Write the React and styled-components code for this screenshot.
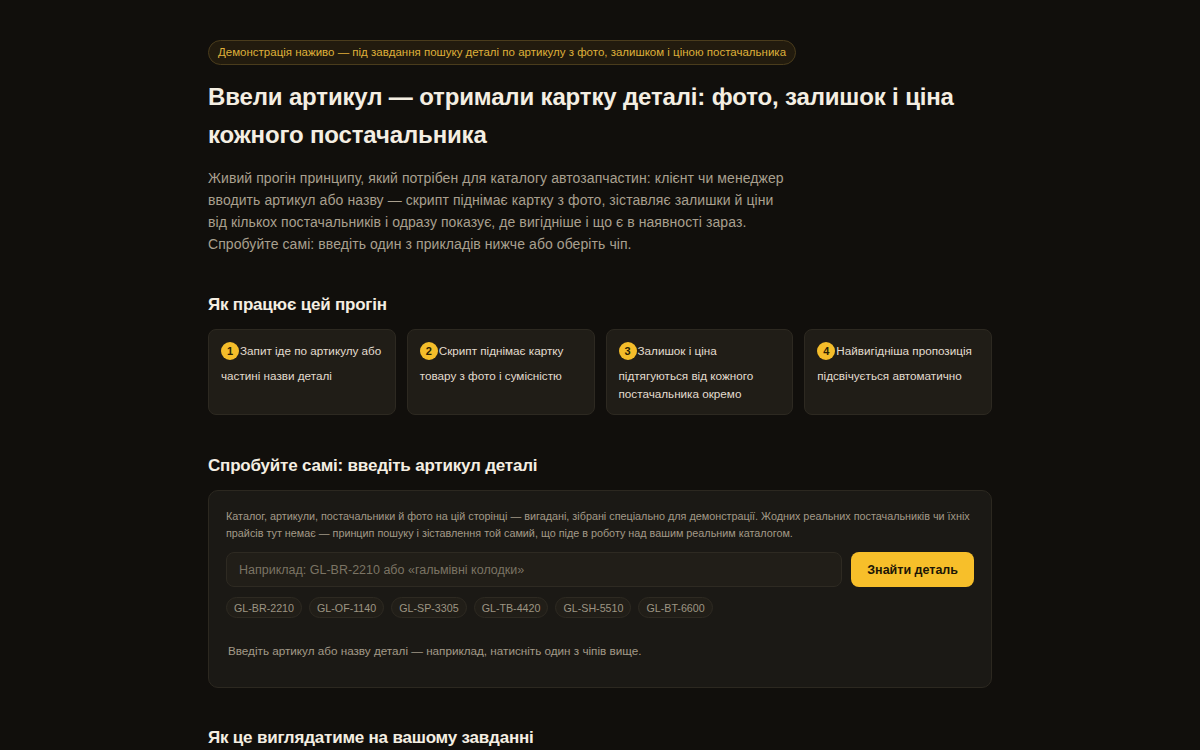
import React, { useState } from "react";
import styled, { createGlobalStyle } from "styled-components";

const GlobalStyle = createGlobalStyle`
  html, body { margin: 0; padding: 0; background: #110f0c; }
  body { font-family: "Liberation Sans", Arial, sans-serif; color: #ece6da; }
  * { box-sizing: border-box; }
`;

const Page = styled.main`
  max-width: 784px;
  margin: 0 auto;
  padding: 40px 0 60px;
`;

const Badge = styled.span`
  display: inline-block;
  height: 25px;
  line-height: 23px;
  padding: 0 9px;
  border: 1px solid #4a3c1c;
  border-radius: 999px;
  background: #221b0e;
  color: #dfb03a;
  font-size: 11.5px;
`;

const Title = styled.h1`
  margin: 13px 0 0;
  font-size: 24px;
  line-height: 38px;
  font-weight: 700;
  letter-spacing: -0.15px;
  color: #f4eee2;
  max-width: 760px;
`;

const Lead = styled.p`
  margin: 13px 0 0;
  max-width: 580px;
  font-size: 14px;
  line-height: 22px;
  letter-spacing: 0.08px;
  color: #a9a08f;
`;

const SectionTitle = styled.h2`
  margin: ${(p) => p.$top || 40}px 0 0;
  font-size: 17px;
  line-height: 24px;
  font-weight: 700;
  letter-spacing: -0.2px;
  color: #f4eee2;
`;

const Steps = styled.div`
  display: grid;
  grid-template-columns: repeat(4, 1fr);
  gap: 11px;
  margin-top: 12px;
`;

const Step = styled.div`
  min-height: 86px;
  padding: 12px 10px 10px 12px;
  background: #201d17;
  border: 1px solid #2d2921;
  border-radius: 8px;
  font-size: 11.7px;
  line-height: 18px;
  color: #e2dccf;
`;

const StepHead = styled.div`
  display: flex;
  align-items: center;
  gap: 1px;
  height: 18px;
  margin-bottom: 7px;
  white-space: nowrap;
`;

const Num = styled.span`
  display: inline-flex;
  align-items: center;
  justify-content: center;
  flex: none;
  width: 18px;
  height: 18px;
  border-radius: 50%;
  background: #f4bd2a;
  color: #2a1f05;
  font-size: 11px;
  font-weight: 700;
`;

const StepText = styled.div``;

const Panel = styled.section`
  margin-top: 12px;
  padding: 17px 17px 27px;
  background: #1b1915;
  border: 1px solid #2c2820;
  border-radius: 10px;
`;

const Note = styled.p`
  margin: 0;
  font-size: 10.8px;
  line-height: 17px;
  color: #a39a88;
`;

const SearchRow = styled.form`
  display: flex;
  gap: 9px;
  margin-top: 10px;
`;

const Input = styled.input`
  flex: 1;
  height: 35px;
  padding: 0 12px;
  background: #211e18;
  border: 1px solid #2e2a22;
  border-radius: 8px;
  color: #ece6da;
  font-family: inherit;
  font-size: 12.5px;
  outline: none;
  &::placeholder { color: #7b7464; }
`;

const Button = styled.button`
  height: 35px;
  padding: 0 16px;
  border: 0;
  border-radius: 8px;
  background: #f7bf2a;
  color: #1d1606;
  font-family: inherit;
  font-size: 12.5px;
  font-weight: 700;
  cursor: pointer;
`;

const Chips = styled.div`
  display: flex;
  flex-wrap: wrap;
  gap: 7px;
  margin-top: 10px;
`;

const Chip = styled.button`
  height: 21px;
  padding: 0 7px;
  background: #211e18;
  border: 1px solid #2e2a22;
  border-radius: 999px;
  color: #9d9583;
  font-family: inherit;
  font-size: 10.7px;
  cursor: pointer;
`;

const Result = styled.p`
  margin: 24px 0 0 2px;
  font-size: 11.7px;
  line-height: 18px;
  color: #a39a88;
`;

const steps = [
  ["Запит іде по артикулу або", "частині назви деталі"],
  ["Скрипт піднімає картку", "товару з фото і сумісністю"],
  ["Залишок і ціна", "підтягуються від кожного постачальника окремо"],
  ["Найвигідніша пропозиція", "підсвічується автоматично"],
];

const chips = ["GL-BR-2210", "GL-OF-1140", "GL-SP-3305", "GL-TB-4420", "GL-SH-5510", "GL-BT-6600"];

export default function App() {
  const [query, setQuery] = useState("");
  return (
    <>
      <GlobalStyle />
      <Page>
        <Badge>Демонстрація наживо — під завдання пошуку деталі по артикулу з фото, залишком і ціною постачальника</Badge>
        <Title>Ввели артикул — отримали картку деталі: фото, залишок і ціна кожного постачальника</Title>
        <Lead>
          Живий прогін принципу, який потрібен для каталогу автозапчастин: клієнт чи менеджер вводить артикул або назву — скрипт піднімає картку з фото, зіставляє залишки й ціни від кількох постачальників і одразу показує, де вигідніше і що є в наявності зараз. Спробуйте самі: введіть один з прикладів нижче або оберіть чіп.
        </Lead>

        <SectionTitle $top={38}>Як працює цей прогін</SectionTitle>
        <Steps>
          {steps.map(([head, rest], i) => (
            <Step key={i}>
              <StepHead>
                <Num>{i + 1}</Num>
                {head}
              </StepHead>
              <StepText>{rest}</StepText>
            </Step>
          ))}
        </Steps>

        <SectionTitle $top={39}>Спробуйте самі: введіть артикул деталі</SectionTitle>
        <Panel>
          <Note>
            Каталог, артикули, постачальники й фото на цій сторінці — вигадані, зібрані спеціально для демонстрації. Жодних реальних постачальників чи їхніх прайсів тут немає — принцип пошуку і зіставлення той самий, що піде в роботу над вашим реальним каталогом.
          </Note>
          <SearchRow onSubmit={(e) => e.preventDefault()}>
            <Input
              value={query}
              onChange={(e) => setQuery(e.target.value)}
              placeholder="Наприклад: GL-BR-2210 або «гальмівні колодки»"
            />
            <Button type="submit">Знайти деталь</Button>
          </SearchRow>
          <Chips>
            {chips.map((c) => (
              <Chip key={c} type="button" onClick={() => setQuery(c)}>{c}</Chip>
            ))}
          </Chips>
          <Result>Введіть артикул або назву деталі — наприклад, натисніть один з чіпів вище.</Result>
        </Panel>

        <SectionTitle $top={38}>Як це виглядатиме на вашому завданні</SectionTitle>
      </Page>
    </>
  );
}
